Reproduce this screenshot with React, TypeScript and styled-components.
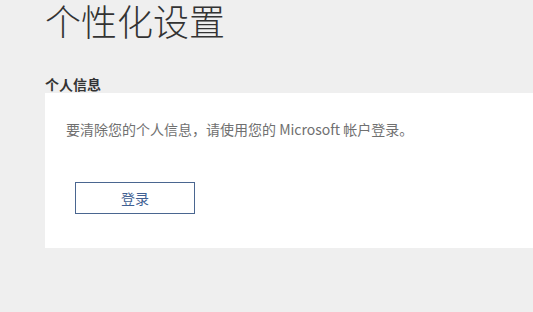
import React from 'react';
import styled, { createGlobalStyle } from 'styled-components';

const GlobalStyle = createGlobalStyle`
  html, body {
    margin: 0;
    padding: 0;
    background: #efefef;
  }
  body {
    font-family: "Noto Sans CJK SC", "Noto Sans", sans-serif;
  }
`;

const Page = styled.div`
  width: 533px;
  height: 312px;
  overflow: hidden;
  padding-left: 45px;
  box-sizing: border-box;
`;

const Title = styled.h1`
  margin: 0;
  padding-top: 1px;
  font-size: 36px;
  line-height: 38px;
  font-weight: 300;
  color: #333;
`;

const SectionLabel = styled.h2`
  margin: 36px 0 0;
  font-size: 14px;
  line-height: 18px;
  font-weight: 700;
  color: #333;
`;

const Panel = styled.section`
  height: 155px;
  background: #fff;
  box-sizing: border-box;
  padding: 27px 0 0 21px;
`;

const Message = styled.p`
  margin: 0;
  font-size: 14px;
  line-height: 19px;
  color: #707070;
`;

const SignInButton = styled.button`
  display: flex;
  align-items: center;
  justify-content: center;
  margin: 43px 0 0 9px;
  width: 120px;
  height: 32px;
  padding: 0;
  background: #fff;
  border: 1px solid #4a6690;
  border-radius: 0;
  color: #3f5f93;
  font-family: "Noto Sans CJK SC", "Noto Sans", sans-serif;
  font-size: 14px;
  cursor: pointer;
`;

export default function App() {
  return (
    <>
      <GlobalStyle />
      <Page>
        <Title>个性化设置</Title>
        <SectionLabel>个人信息</SectionLabel>
        <Panel>
          <Message>要清除您的个人信息，请使用您的 Microsoft 帐户登录。</Message>
          <SignInButton>登录</SignInButton>
        </Panel>
      </Page>
    </>
  );
}
